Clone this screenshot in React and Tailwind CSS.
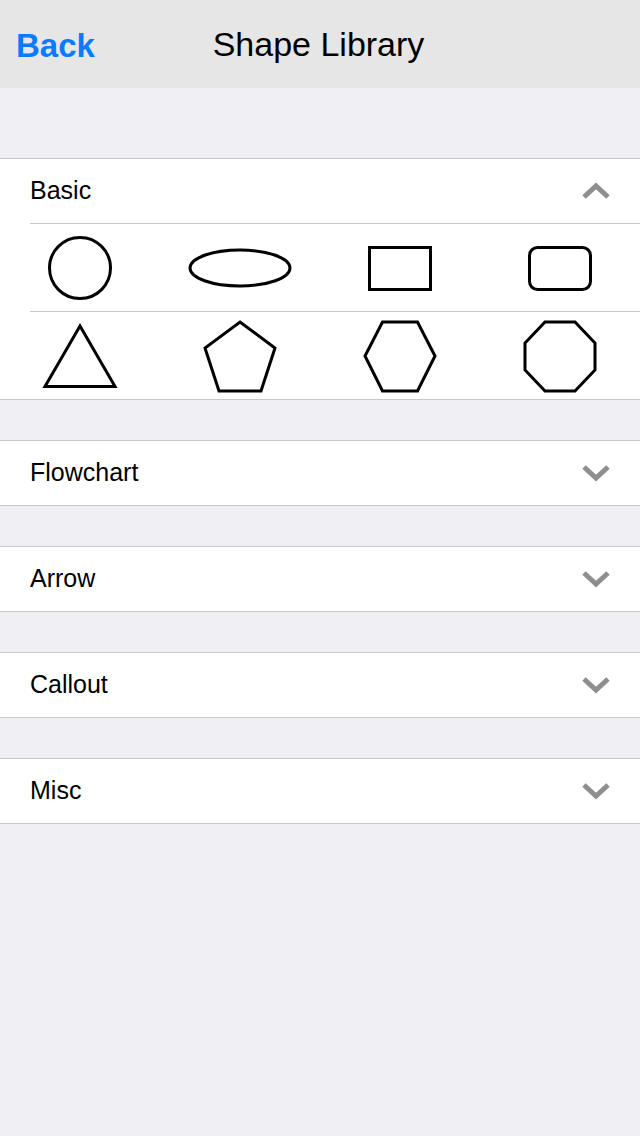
import React, { useState } from 'react';

const font = { fontFamily: '"Liberation Sans", Arial, sans-serif' };

function Chevron({ up }) {
  return (
    <svg width="30" height="18" viewBox="0 0 30 18" className="text-[#8e8e8e]">
      <path
        d={up ? 'M3 15 L15 4 L27 15' : 'M3 3 L15 14 L27 3'}
        fill="none"
        stroke="currentColor"
        strokeWidth="5"
        strokeLinejoin="miter"
      />
    </svg>
  );
}

function Shape({ children }) {
  return (
    <div className="flex items-center justify-center h-[87px]">
      <svg width="100" height="80" viewBox="0 0 100 80" fill="none" stroke="black" strokeWidth="3" className="overflow-visible">
        {children}
      </svg>
    </div>
  );
}

const rowOne = [
  <circle cx="50" cy="40" r="30.5" />,
  <ellipse cx="50" cy="40" rx="50" ry="18" />,
  <rect x="19.5" y="19.5" width="61" height="42" />,
  <rect x="19.5" y="19.5" width="61" height="42" rx="8" />,
];

const rowTwo = [
  <polygon points="50,10 15,70.5 85,70.5" />,
  <polygon points="50,6 85,32 71,75 29,75 15,32" />,
  <polygon points="32.5,6 67.5,6 85,40 67.5,75 32.5,75 15,40" />,
  <polygon points="35,6 65,6 85,27 85,54 65,75 35,75 15,54 15,27" />,
];

function Section({ title, open, onToggle, children }) {
  return (
    <div className="bg-white border-y border-[#c8c7cc] mb-10">
      <button onClick={onToggle} className="w-full h-16 flex items-center justify-between pl-[30px] pr-[29px]">
        <span className="text-[25px] text-black">{title}</span>
        <Chevron up={open} />
      </button>
      {open && children}
    </div>
  );
}

export default function App() {
  const [openSection, setOpenSection] = useState('Basic');
  const sections = ['Basic', 'Flowchart', 'Arrow', 'Callout', 'Misc'];

  return (
    <div className="min-h-[1136px] w-[640px] bg-[#efeff4]" style={font}>
      <div className="h-[88px] bg-[#e6e6e6] relative flex items-center justify-center">
        <button className="absolute left-[16px] top-[29px] text-[33px] font-bold text-[#0a7aff] leading-none">
          Back
        </button>
        <h1 className="text-[34px] text-black leading-none pr-[3px]">Shape Library</h1>
      </div>

      <div className="h-[70px]" />

      {sections.map((s) => (
        <Section
          key={s}
          title={s}
          open={openSection === s}
          onToggle={() => setOpenSection(openSection === s ? '' : s)}
        >
          <div className="ml-[30px] border-t border-[#c8c7cc]" />
          <div className="grid grid-cols-4">
            {rowOne.map((shape, i) => (
              <Shape key={i}>{shape}</Shape>
            ))}
          </div>
          <div className="ml-[30px] border-t border-[#c8c7cc]" />
          <div className="grid grid-cols-4">
            {rowTwo.map((shape, i) => (
              <Shape key={i}>{shape}</Shape>
            ))}
          </div>
        </Section>
      ))}
    </div>
  );
}
